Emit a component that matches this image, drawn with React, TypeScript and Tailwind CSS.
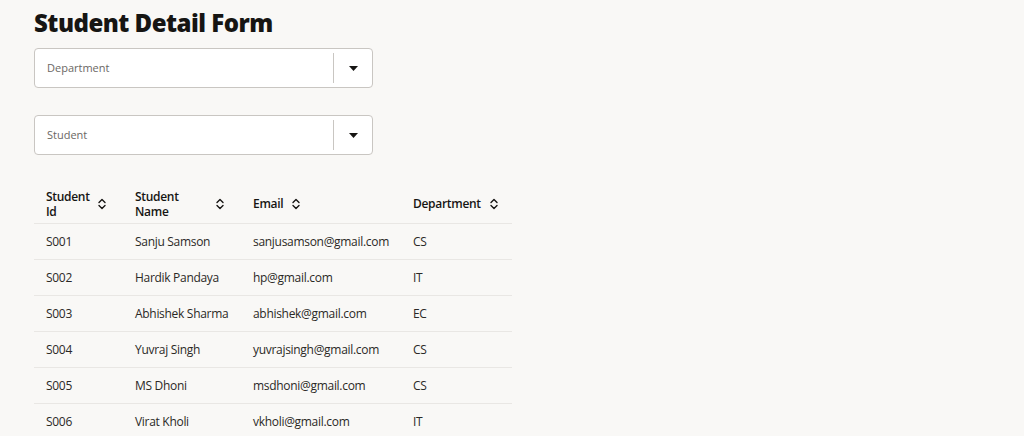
import React from "react";

const rows = [
  ["S001", "Sanju Samson", "sanjusamson@gmail.com", "CS"],
  ["S002", "Hardik Pandaya", "hp@gmail.com", "IT"],
  ["S003", "Abhishek Sharma", "abhishek@gmail.com", "EC"],
  ["S004", "Yuvraj Singh", "yuvrajsingh@gmail.com", "CS"],
  ["S005", "MS Dhoni", "msdhoni@gmail.com", "CS"],
  ["S006", "Virat Kholi", "vkholi@gmail.com", "IT"],
];

function SortIcon() {
  return (
    <svg width="10" height="12" viewBox="0 0 10 12" fill="none" stroke="#161513" strokeWidth="1.4" strokeLinecap="round" strokeLinejoin="round">
      <path d="M2 4.5 L5 1.5 L8 4.5" />
      <path d="M2 7.5 L5 10.5 L8 7.5" />
    </svg>
  );
}

function Select({ label }: { label: string }) {
  return (
    <div className="flex h-[40px] w-[339px] items-center rounded-[4px] border border-[#c9c6c2] bg-white">
      <div className="flex-1 pl-[12px] text-[11px] text-[#6b6864]">{label}</div>
      <div className="h-[30px] w-px bg-[#c9c6c2]" />
      <div className="flex w-[38px] items-center justify-center">
        <svg width="9" height="5" viewBox="0 0 9 5"><path d="M0 0 L9 0 L4.5 5 Z" fill="#161513" /></svg>
      </div>
    </div>
  );
}

export default function App() {
  return (
    <div className="min-h-[436px] w-full bg-[#f9f8f6] pl-[34px] pt-[8px] text-[#161513]" style={{ fontFamily: '"Open Sans", "Noto Sans", sans-serif' }}>
      <h1 className="text-[24px] font-extrabold leading-[30px] tracking-[-0.5px]">Student Detail Form</h1>
      <div className="mt-[10px] flex flex-col gap-[27px]">
        <Select label="Department" />
        <Select label="Student" />
      </div>
      <table className="mt-[30px] w-[478px] table-fixed border-collapse text-[12px] tracking-[-0.3px]">
        <colgroup>
          <col className="w-[89px]" />
          <col className="w-[118px]" />
          <col className="w-[160px]" />
          <col className="w-[111px]" />
        </colgroup>
        <thead>
          <tr className="h-[38px] border-b border-[#e9e7e4] text-left">
            {[["Student", "Id"], ["Student", "Name"], ["Email"], ["Department"]].map((h, i) => (
              <th key={i} className={`pl-[12px] font-semibold leading-[15px] ${i < 2 ? "pr-[16px]" : "pr-[12px]"}`}>
                <div className={`flex items-center ${i < 2 ? "justify-between" : "gap-[8px]"}`}>
                  <span>{h.map((t, j) => <div key={j}>{t}</div>)}</span>
                  <SortIcon />
                </div>
              </th>
            ))}
          </tr>
        </thead>
        <tbody>
          {rows.map((r) => (
            <tr key={r[0]} className="h-[36px] border-b border-[#e9e7e4]">
              {r.map((c, i) => (
                <td key={i} className="whitespace-nowrap px-[12px] pt-[2px] text-[#2b2926]">{c}</td>
              ))}
            </tr>
          ))}
        </tbody>
      </table>
    </div>
  );
}
